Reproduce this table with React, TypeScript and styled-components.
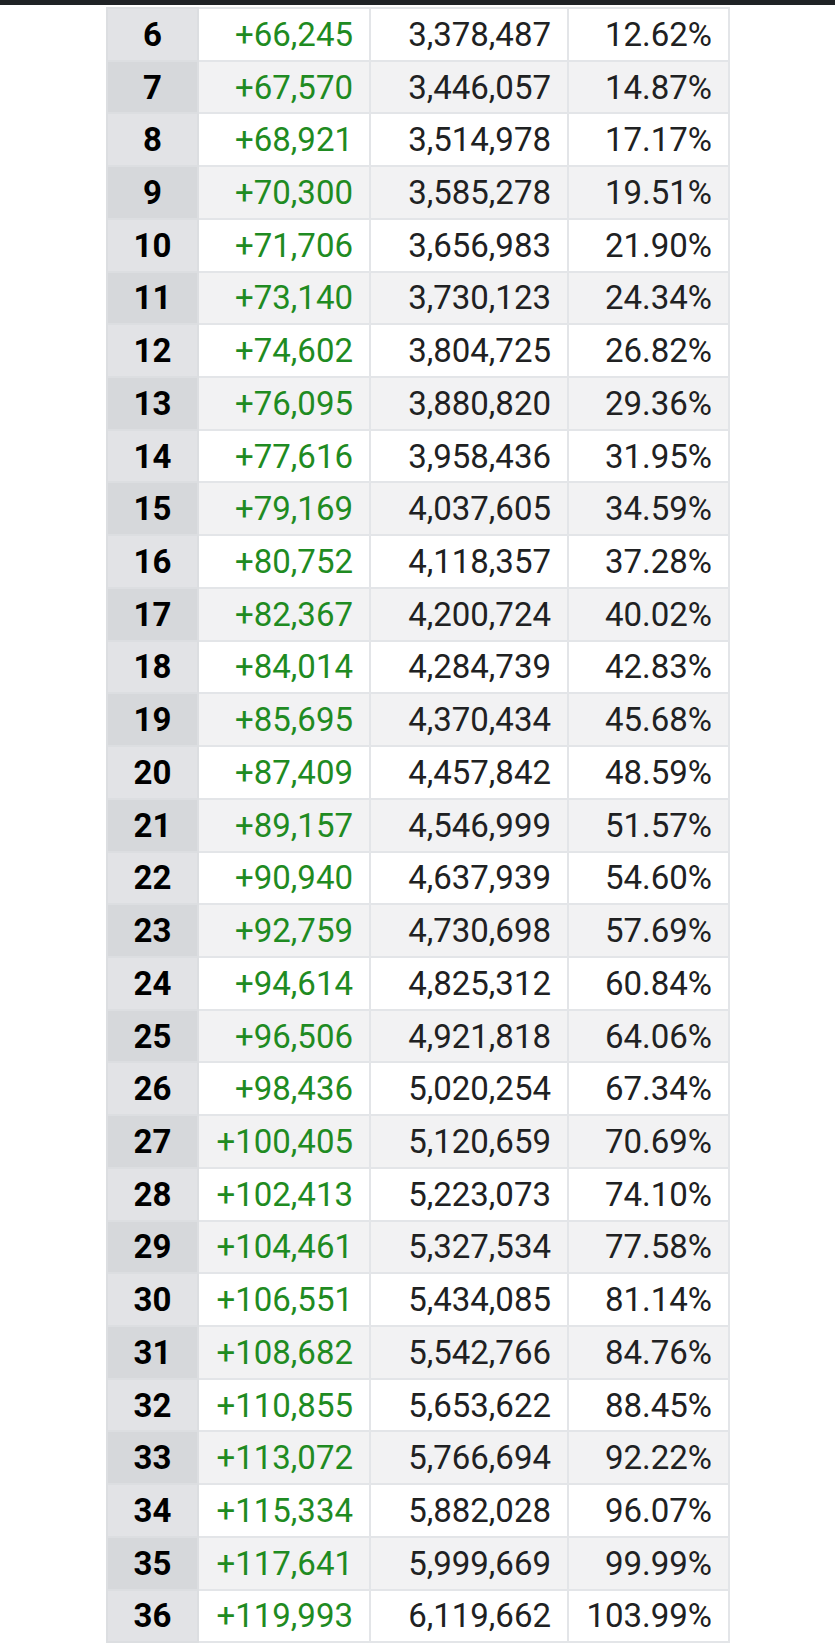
import React from "react";
import styled, { createGlobalStyle } from "styled-components";

const GlobalStyle = createGlobalStyle`
  html, body { margin: 0; padding: 0; background: #ffffff; }
  body { font-family: Roboto, "Noto Sans", "Liberation Sans", sans-serif; }
`;

const rows: [number, string, string, string][] = [
  [6, "+66,245", "3,378,487", "12.62%"],
  [7, "+67,570", "3,446,057", "14.87%"],
  [8, "+68,921", "3,514,978", "17.17%"],
  [9, "+70,300", "3,585,278", "19.51%"],
  [10, "+71,706", "3,656,983", "21.90%"],
  [11, "+73,140", "3,730,123", "24.34%"],
  [12, "+74,602", "3,804,725", "26.82%"],
  [13, "+76,095", "3,880,820", "29.36%"],
  [14, "+77,616", "3,958,436", "31.95%"],
  [15, "+79,169", "4,037,605", "34.59%"],
  [16, "+80,752", "4,118,357", "37.28%"],
  [17, "+82,367", "4,200,724", "40.02%"],
  [18, "+84,014", "4,284,739", "42.83%"],
  [19, "+85,695", "4,370,434", "45.68%"],
  [20, "+87,409", "4,457,842", "48.59%"],
  [21, "+89,157", "4,546,999", "51.57%"],
  [22, "+90,940", "4,637,939", "54.60%"],
  [23, "+92,759", "4,730,698", "57.69%"],
  [24, "+94,614", "4,825,312", "60.84%"],
  [25, "+96,506", "4,921,818", "64.06%"],
  [26, "+98,436", "5,020,254", "67.34%"],
  [27, "+100,405", "5,120,659", "70.69%"],
  [28, "+102,413", "5,223,073", "74.10%"],
  [29, "+104,461", "5,327,534", "77.58%"],
  [30, "+106,551", "5,434,085", "81.14%"],
  [31, "+108,682", "5,542,766", "84.76%"],
  [32, "+110,855", "5,653,622", "88.45%"],
  [33, "+113,072", "5,766,694", "92.22%"],
  [34, "+115,334", "5,882,028", "96.07%"],
  [35, "+117,641", "5,999,669", "99.99%"],
  [36, "+119,993", "6,119,662", "103.99%"],
];

const StatusBar = styled.div`
  position: fixed;
  top: 0;
  left: 0;
  right: 0;
  height: 5px;
  background: #1f2225;
  z-index: 10;
`;

const Page = styled.div`
  padding: 7px 0 0 106px;
`;

const Table = styled.table`
  width: 622px;
  border-collapse: collapse;
  table-layout: fixed;
  border: 2px solid #dcdee1;
`;

const Col = styled.col<{ $w: number }>`
  width: ${(p) => p.$w}px;
`;

const Row = styled.tr<{ $shade: boolean }>`
  height: 52.73px;
  background: ${(p) => (p.$shade ? "#f2f2f3" : "#ffffff")};
`;

const HeadCell = styled.th<{ $shade: boolean }>`
  padding: 0;
  text-align: center;
  font-weight: 700;
  font-size: 33px;
  color: #000000;
  background: ${(p) => (p.$shade ? "#d6d8db" : "#e2e3e6")};
  border: 2px solid #dcdee1;
`;

const Cell = styled.td<{ $green?: boolean }>`
  padding: 0 16px 0 0;
  text-align: right;
  font-size: 33px;
  font-weight: 400;
  color: ${(p) => (p.$green ? "#1f8b22" : "#202122")};
  border: 2px solid #e3e5e8;
  white-space: nowrap;
`;

export default function App() {
  return (
    <>
      <GlobalStyle />
      <StatusBar />
      <Page>
        <Table>
          <colgroup>
            <Col $w={91} />
            <Col $w={172} />
            <Col $w={198} />
            <Col $w={161} />
          </colgroup>
          <tbody>
            {rows.map(([n, gain, total, pct]) => {
              const shade = n % 2 === 1;
              return (
                <Row key={n} $shade={shade}>
                  <HeadCell $shade={shade}>{n}</HeadCell>
                  <Cell $green>{gain}</Cell>
                  <Cell>{total}</Cell>
                  <Cell>{pct}</Cell>
                </Row>
              );
            })}
          </tbody>
        </Table>
      </Page>
    </>
  );
}
